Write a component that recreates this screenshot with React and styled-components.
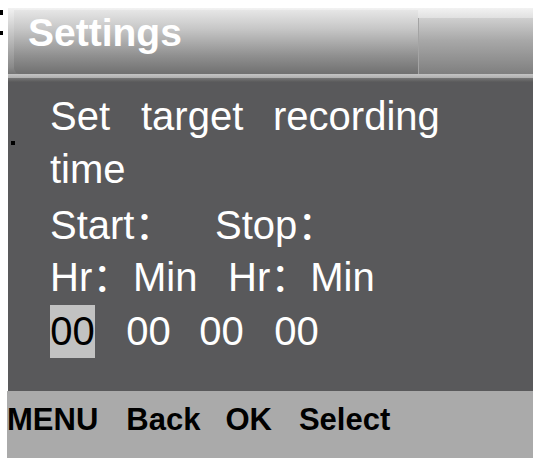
import React from "react";
import styled, { createGlobalStyle } from "styled-components";

const Global = createGlobalStyle`
  html, body {
    margin: 0;
    padding: 0;
    background: #ffffff;
    font-family: "Liberation Sans", Arial, "Noto Sans CJK SC", sans-serif;
  }
`;

const Page = styled.div`
  width: 540px;
  height: 462px;
  padding: 8px 0 0 8px;
  box-sizing: border-box;
  position: relative;
`;

const Screen = styled.div`
  width: 525px;
  display: flex;
  flex-direction: column;
`;

const Header = styled.div`
  height: 74px;
  display: flex;
  flex-direction: column;
  background: linear-gradient(#f2f2f2, #8a8a8a 80%, #5d5d5d);
`;

const HeaderTop = styled.div`
  height: 66px;
  display: flex;
  align-items: stretch;
  padding-left: 6px;
`;

const TitlePanel = styled.div`
  flex: 0 0 404px;
  margin-top: 2px;
  border-radius: 0 0 0 6px;
  background: linear-gradient(#e6e6e6 0%, #c6c6c6 30%, #8f8f8f 72%, #707070 100%);
  display: flex;
  align-items: center;
  padding: 0 0 18px 14px;
  box-sizing: border-box;
`;

const Title = styled.span`
  color: #ffffff;
  font-weight: bold;
  font-size: 39px;
`;

const SidePanel = styled.div`
  flex: 1;
  margin-top: 10px;
  background: linear-gradient(#cfcfcf 0%, #a8a8a8 40%, #7f7f7f 100%);
  box-shadow: inset 1px 0 0 #a4a4a4;
`;

const HeaderRule = styled.div`
  height: 4px;
  background: linear-gradient(#c4c4c4, #aeaeae);
`;

const HeaderFoot = styled.div`
  flex: 1;
  background: linear-gradient(#767676, #5a5a5b);
`;

const Body = styled.div`
  height: 309px;
  background: #59595b;
  padding: 8px 0 0 42px;
  box-sizing: border-box;
  color: #ffffff;
  font-size: 40px;
`;

const Row = styled.div`
  display: flex;
  align-items: baseline;
  height: ${(p) => p.$h || 53}px;
  line-height: 53px;
`;

const Cell = styled.span`
  flex: 0 0 ${(p) => (p.$w ? `${p.$w}px` : "auto")};
  white-space: pre;
`;

const Digits = styled.div`
  display: flex;
  align-items: center;
  height: 53px;
  margin-top: 1px;
`;

const Digit = styled.span`
  display: inline-flex;
  align-items: center;
  justify-content: center;
  height: 53px;
  width: 45px;
  margin-right: ${(p) => p.$mr || 0}px;
  background: ${(p) => (p.$active ? "#c2c2c2" : "transparent")};
  color: ${(p) => (p.$active ? "#000000" : "#ffffff")};
`;

const Footer = styled.div`
  height: 67px;
  background: #aaaaaa;
  display: flex;
  align-items: center;
  padding: 0 0 10px 0;
  box-sizing: border-box;
  margin-left: -1px;
`;

const Key = styled.span`
  font-weight: bold;
  font-size: 31px;
  color: #000000;
  margin-right: ${(p) => p.$mr}px;
`;

const Dot = styled.span`
  position: absolute;
  left: ${(p) => p.$x}px;
  top: ${(p) => p.$y}px;
  width: ${(p) => p.$w || 4}px;
  height: ${(p) => p.$h || 4}px;
  background: #000;
`;

export default function App() {
  return (
    <>
      <Global />
      <Page>
        <Dot $x={0} $y={10} $w={3} $h={5} />
        <Dot $x={0} $y={31} $w={3} $h={4} />
        <Dot $x={11} $y={141} $w={4} $h={4} />
        <Screen>
          <Header>
            <HeaderTop>
              <TitlePanel>
                <Title>Settings</Title>
              </TitlePanel>
              <SidePanel />
            </HeaderTop>
            <HeaderRule />
            <HeaderFoot />
          </Header>
          <Body>
            <Row>
              <Cell $w={91}>Set</Cell>
              <Cell $w={132}>target</Cell>
              <Cell>recording</Cell>
            </Row>
            <Row $h={56}>
              <Cell>time</Cell>
            </Row>
            <Row $h={52}>
              <Cell $w={165}>Start：</Cell>
              <Cell>Stop：</Cell>
            </Row>
            <Row>
              <Cell $w={83}>Hr：</Cell>
              <Cell $w={95}>Min</Cell>
              <Cell $w={80}>Hr：</Cell>
              <Cell>Min</Cell>
            </Row>
            <Digits>
              <Digit $active $mr={31}>00</Digit>
              <Digit $mr={28}>00</Digit>
              <Digit $mr={30}>00</Digit>
              <Digit>00</Digit>
            </Digits>
          </Body>
          <Footer>
            <Key $mr={28}>MENU</Key>
            <Key $mr={25}>Back</Key>
            <Key $mr={27}>OK</Key>
            <Key $mr={0}>Select</Key>
          </Footer>
        </Screen>
      </Page>
    </>
  );
}
